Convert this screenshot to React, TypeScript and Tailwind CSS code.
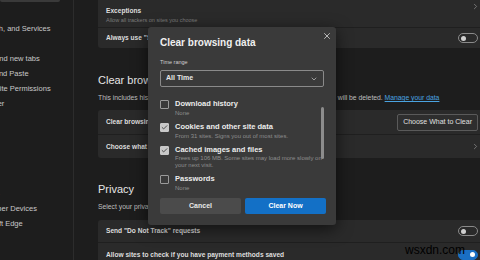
import React from 'react';
import { ChevronRight, ChevronDown, X, Check } from 'lucide-react';

const navItems = [
  'Profiles',
  'Privacy, Search, and Services',
  'Appearance',
  'Start, Home, and new tabs',
  'Share, Copy and Paste',
  'Cookies and Site Permissions',
  'Default Browser',
  'Downloads',
  'Family Safety',
  'Languages',
  'Printers',
  'System',
  'Reset Settings',
  'Phone and Other Devices',
  'About Microsoft Edge',
];

const Toggle: React.FC<{ on?: boolean }> = ({ on }) => (
  <div
    className={`w-[20px] h-[10px] rounded-full border flex items-center px-[2px] ${
      on ? 'bg-[#1a6fc4] border-[#1a6fc4] justify-end' : 'border-[#8a8a8a] justify-start'
    }`}
  >
    <div className={`w-[5px] h-[5px] rounded-full ${on ? 'bg-white' : 'bg-[#d0d0d0]'}`}></div>
  </div>
);

const Row: React.FC<{ children: React.ReactNode; right?: React.ReactNode; last?: boolean; h: string }> = ({
  children,
  right,
  last,
  h,
}) => (
  <div className={`flex items-center justify-between pl-[8px] pr-[2px] ${h} ${last ? '' : 'border-b border-[#1f1f1f]'}`}>
    <div>{children}</div>
    {right}
  </div>
);

const Item: React.FC<{ label: string; sub: string[]; checked?: boolean }> = ({ label, sub, checked }) => (
  <div className="flex gap-[6px]">
    <div
      className={`w-[9px] h-[9px] mt-[1px] rounded-[1px] border flex items-center justify-center shrink-0 ${
        checked ? 'bg-[#c8c8c8] border-[#c8c8c8]' : 'border-[#9a9a9a]'
      }`}
    >
      {checked && <Check size={7} strokeWidth={3} className="text-[#3a3a3a]" />}
    </div>
    <div>
      <div className="text-[7.5px] font-bold text-[#ececec] leading-[10px]">{label}</div>
      {sub.map((s, i) => (
        <div key={i} className={`text-[6px] text-[#8e8e8e] ${sub.length > 1 ? 'leading-[7px]' : 'leading-[8px]'}`}>
          {s}
        </div>
      ))}
    </div>
  </div>
);

export default function App() {
  return (
    <div
      className="relative w-[480px] h-[260px] overflow-hidden bg-[#1d1d1d] flex text-[#dcdcdc]"
      style={{ fontFamily: '"Liberation Sans", Arial, sans-serif' }}
    >
      <div className="w-[74px] shrink-0 border-r border-[#2c2c2c] overflow-hidden relative">
        <div className="h-[2px] w-[60px] bg-[#3a3a3a] rounded-b"></div>
        <div className="ml-[-49px] mt-[4px] flex flex-col">
          {navItems.map((n) => (
            <div key={n} className="h-[15px] leading-[15px] text-[7.5px] text-[#c8c8c8] whitespace-nowrap">
              {n}
            </div>
          ))}
        </div>
      </div>

      <div className="flex-1 pl-[24px] mr-[-6px] flex flex-col">
        <div className="bg-[#2a2a2a] rounded-b-[3px] mt-[-2px]">
          <Row h="h-[30px]" right={<ChevronRight size={9} className="text-[#8a8a8a] self-start mt-[4px] mr-[4px]" />}>
            <div className="text-[6.6px] font-bold text-[#dedede] leading-[10px] mt-[4px]">Exceptions</div>
            <div className="text-[5.5px] text-[#7a7a7a] leading-[8px]">Allow all trackers on sites you choose</div>
          </Row>
          <Row h="h-[20px]" last right={<div className="mr-[6px]"><Toggle /></div>}>
            <div className="text-[6.6px] font-bold text-[#dedede]">
              Always use &quot;Strict&quot; tracking prevention when browsing InPrivate
            </div>
          </Row>
        </div>

        <div className="text-[11px] text-[#e6e6e6] mt-[25px] leading-[14px]">Clear browsing data</div>
        <div className="text-[6.8px] text-[#bdbdbd] mt-[6px] whitespace-nowrap">
          This includes history, passwords, cookies, and more. Only data from this profile will be deleted.{' '}
          <span className="text-[#4aa3e0] underline">Manage your data</span>
        </div>

        <div className="bg-[#2a2a2a] rounded-[3px] mt-[7px]">
          <Row
            h="h-[25px]"
            right={
              <div className="h-[17px] px-[5px] mr-[6px] border border-[#5a5a5a] rounded-[2px] bg-[#2e2e2e] text-[7px] text-[#e0e0e0] flex items-center whitespace-nowrap">
                Choose What to Clear
              </div>
            }
          >
            <div className="text-[6.6px] font-bold text-[#dedede]">Clear browsing data now</div>
          </Row>
          <Row h="h-[23px]" last right={<ChevronRight size={9} className="text-[#8a8a8a] mr-[4px]" />}>
            <div className="text-[6.6px] font-bold text-[#dedede] whitespace-nowrap">
              Choose what to clear every time you close the browser
            </div>
          </Row>
        </div>

        <div className="text-[11px] text-[#e6e6e6] mt-[24px] leading-[14px]">Privacy</div>
        <div className="text-[6.8px] text-[#bdbdbd] mt-[6px] whitespace-nowrap">
          Select your privacy settings for Microsoft Edge
        </div>

        <div className="bg-[#2a2a2a] rounded-[3px] mt-[8px]">
          <Row h="h-[23px]" right={<div className="mr-[6px]"><Toggle /></div>}>
            <div className="text-[6.6px] font-bold text-[#dedede]">Send &quot;Do Not Track&quot; requests</div>
          </Row>
          <Row h="h-[23px]" last right={<div className="mr-[6px]"><Toggle on /></div>}>
            <div className="text-[6.6px] font-bold text-[#dedede] whitespace-nowrap">
              Allow sites to check if you have payment methods saved
            </div>
          </Row>
        </div>
      </div>

      {/* dialog */}
      <div className="absolute left-[148px] top-[27px] w-[188px] h-[198px] bg-[#3a3a3a] rounded-[3px] shadow-[0_4px_16px_rgba(0,0,0,0.6)] px-[12px] pt-[10px] flex flex-col">
        <X size={10} className="absolute right-[4px] top-[4px] text-[#d0d0d0]" />
        <div className="text-[10px] font-bold text-[#f0f0f0] leading-[12px]">Clear browsing data</div>
        <div className="text-[5.5px] text-[#cfcfcf] mt-[10px] leading-[7px]">Time range</div>
        <div className="mt-[4px] h-[17px] border border-[#8a8a8a] rounded-[2px] flex items-center justify-between px-[5px]">
          <span className="text-[7px] font-bold text-[#e8e8e8]">All Time</span>
          <ChevronDown size={8} className="text-[#d0d0d0]" />
        </div>
        <div className="relative mt-[12px] flex flex-col gap-[5px]">
          <div className="absolute right-[0px] top-[8px] w-[3px] h-[52px] rounded-full bg-[#8c8c8c]"></div>
          <Item label="Download history" sub={['None']} />
          <Item label="Cookies and other site data" sub={['From 31 sites. Signs you out of most sites.']} checked />
          <Item
            label="Cached images and files"
            sub={['Frees up 106 MB. Some sites may load more slowly on', 'your next visit.']}
            checked
          />
          <Item label="Passwords" sub={['None']} />
        </div>
        <div className="absolute left-[12px] right-[10px] top-[171px] flex gap-[4px]">
          <div className="flex-1 h-[16px] bg-[#4b4b4b] rounded-[2px] text-[7px] font-bold text-[#e8e8e8] flex items-center justify-center">
            Cancel
          </div>
          <div className="flex-1 h-[16px] bg-[#1370c6] rounded-[2px] text-[7px] font-bold text-white flex items-center justify-center">
            Clear Now
          </div>
        </div>
      </div>

      <div className="absolute left-[405px] top-[243px] text-[12px] text-black leading-[14px]">wsxdn.com</div>
    </div>
  );
}
